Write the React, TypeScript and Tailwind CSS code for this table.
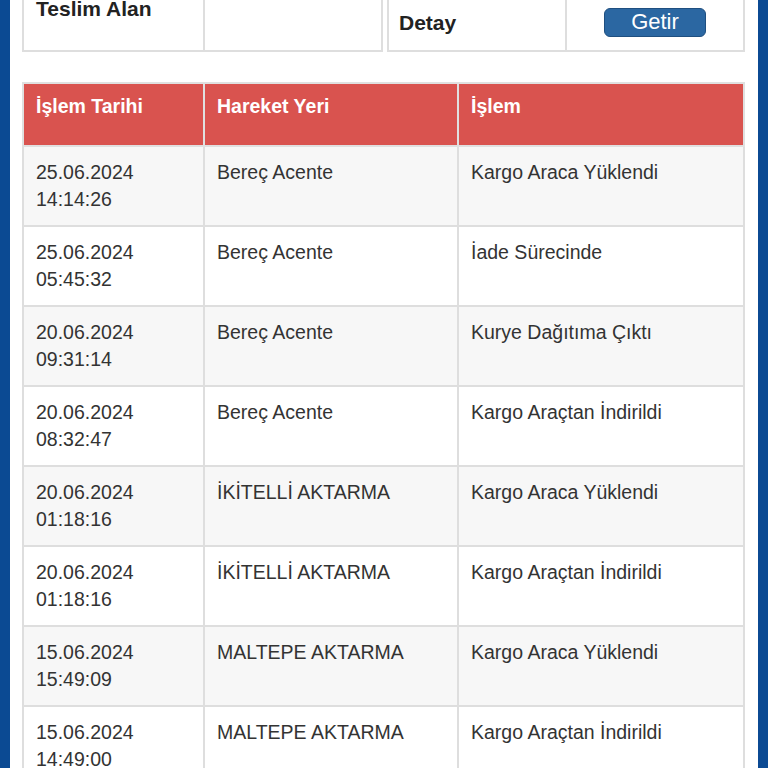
import React from "react";

const rows = [
  ["25.06.2024", "14:14:26", "Bereç Acente", "Kargo Araca Yüklendi"],
  ["25.06.2024", "05:45:32", "Bereç Acente", "İade Sürecinde"],
  ["20.06.2024", "09:31:14", "Bereç Acente", "Kurye Dağıtıma Çıktı"],
  ["20.06.2024", "08:32:47", "Bereç Acente", "Kargo Araçtan İndirildi"],
  ["20.06.2024", "01:18:16", "İKİTELLİ AKTARMA", "Kargo Araca Yüklendi"],
  ["20.06.2024", "01:18:16", "İKİTELLİ AKTARMA", "Kargo Araçtan İndirildi"],
  ["15.06.2024", "15:49:09", "MALTEPE AKTARMA", "Kargo Araca Yüklendi"],
  ["15.06.2024", "14:49:00", "MALTEPE AKTARMA", "Kargo Araçtan İndirildi"],
];

export default function App() {
  return (
    <div
      className="h-[768px] overflow-hidden bg-[#0b4a93] px-[10px] text-[19.5px] leading-[27px] text-[#333]"
      style={{ fontFamily: '"Liberation Sans", Arial, sans-serif' }}
    >
      <div className="flex h-full flex-col overflow-hidden bg-white px-[12px]">
        {/* teslim bilgileri */}
        <div className="-mt-[20px] flex shrink-0 items-end gap-[4px]">
          <table className="w-[361px] border-collapse">
            <tbody>
              <tr className="h-[70px]">
                <td className="w-[181px] border-2 border-[#dedede] px-[12px] pt-[13px] align-top text-[21px] font-bold text-[#222]">
                  Teslim Alan
                </td>
                <td className="border-2 border-[#dedede]"></td>
              </tr>
            </tbody>
          </table>
          <table className="w-[358px] border-collapse">
            <tbody>
              <tr className="h-[58px]">
                <td className="w-[178px] border-2 border-[#dedede] px-[10px] text-[21px] font-bold text-[#222]">
                  Detay
                </td>
                <td className="border-2 border-[#dedede] text-center">
                  <button className="h-[29px] w-[102px] rounded-[6px] border border-[#1f4f80] bg-[#2b67a2] text-[22px] leading-none text-white">
                    Getir
                  </button>
                </td>
              </tr>
            </tbody>
          </table>
        </div>

        {/* hareketler */}
        <table className="mt-[30px] w-[723px] shrink-0 border-collapse">
          <thead>
            <tr className="h-[63px] bg-[#d9534f] text-left text-white">
              <th className="w-[181px] border-2 border-[#e0e0e0] px-[12px] pt-[9px] align-top font-bold">İşlem Tarihi</th>
              <th className="w-[254px] border-2 border-[#e0e0e0] px-[12px] pt-[9px] align-top font-bold">Hareket Yeri</th>
              <th className="border-2 border-[#e0e0e0] px-[12px] pt-[9px] align-top font-bold">İşlem</th>
            </tr>
          </thead>
          <tbody>
            {rows.map((r, i) => (
              <tr key={i} className={i % 2 === 0 ? "h-[80px] bg-[#f7f7f7]" : "h-[80px] bg-white"}>
                <td className="border-2 border-[#dedede] px-[12px] pt-[12px] align-top">
                  {r[0]}
                  <br />
                  {r[1]}
                </td>
                <td className="border-2 border-[#dedede] px-[12px] pt-[12px] align-top">{r[2]}</td>
                <td className="border-2 border-[#dedede] px-[12px] pt-[12px] align-top">{r[3]}</td>
              </tr>
            ))}
          </tbody>
        </table>
      </div>
    </div>
  );
}
